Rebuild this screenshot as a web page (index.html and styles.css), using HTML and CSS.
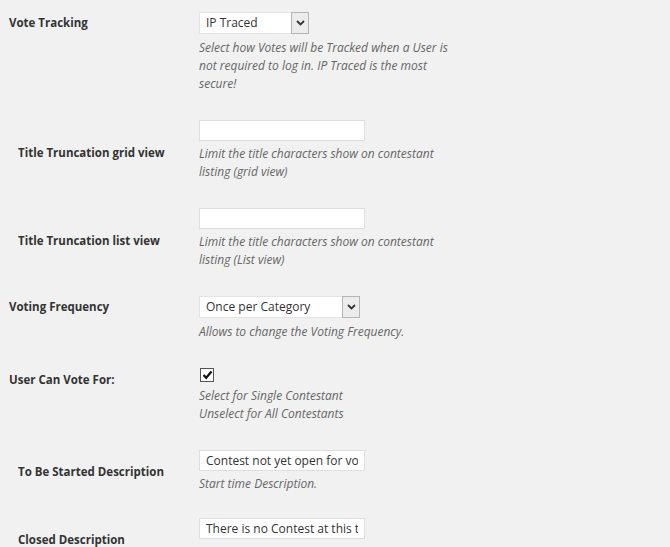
FILE: index.html
```html
<!DOCTYPE html>
<html>
<head>
	<title>Contest settings</title>
	<link rel="stylesheet" href="styles.css">
</head>
<body>
	<div class="settings">
		<div class="row top">
			<label class="label">Vote Tracking</label>
			<div class="field">
				<div class="select narrow">
					<span class="value">IP Traced</span>
					<span class="arrow"><svg width="9" height="6" viewBox="0 0 9 6"><path d="M1 1 L4.5 4.5 L8 1" fill="none" stroke="#333" stroke-width="1.8"/></svg></span>
				</div>
				<p class="desc select-desc">Select how Votes will be Tracked when a User is not required to log in. IP Traced is the most secure!</p>
			</div>
		</div>

		<div class="row sub">
			<label class="label">Title Truncation grid view</label>
			<div class="field">
				<input type="text" class="text" value="">
				<p class="desc">Limit the title characters show on contestant<br>listing (grid view)</p>
			</div>
		</div>

		<div class="row sub">
			<label class="label">Title Truncation list view</label>
			<div class="field">
				<input type="text" class="text" value="">
				<p class="desc">Limit the title characters show on contestant<br>listing (List view)</p>
			</div>
		</div>

		<div class="row top">
			<label class="label">Voting Frequency</label>
			<div class="field">
				<div class="select wide">
					<span class="value">Once per Category</span>
					<span class="arrow"><svg width="9" height="6" viewBox="0 0 9 6"><path d="M1 1 L4.5 4.5 L8 1" fill="none" stroke="#333" stroke-width="1.8"/></svg></span>
				</div>
				<p class="desc select-desc">Allows to change the Voting Frequency.</p>
			</div>
		</div>

		<div class="row top check-row">
			<label class="label">User Can Vote For:</label>
			<div class="field">
				<span class="checkbox"><svg width="11" height="10" viewBox="0 0 11 10"><path d="M1.5 5 L4.2 7.8 L9.5 1.5" fill="none" stroke="#111" stroke-width="2.2"/></svg></span>
				<p class="desc check-desc">Select for Single Contestant<br>Unselect for All Contestants</p>
			</div>
		</div>

		<div class="row sub short">
			<label class="label">To Be Started Description</label>
			<div class="field">
				<input type="text" class="text" value="Contest not yet open for voting">
				<p class="desc">Start time Description.</p>
			</div>
		</div>

		<div class="row sub top last">
			<label class="label">Closed Description</label>
			<div class="field">
				<input type="text" class="text" value="There is no Contest at this time">
			</div>
		</div>
	</div>
</body>
</html>
```

FILE: styles.css
```css
body{
	margin: 0;
	background-color: #f1f1f1;
	font-family: "Open Sans", "Liberation Sans", sans-serif;
	color: #333;
	overflow: hidden;
}
.settings{
	padding: 12px 0 0 9px;
}
.row{
	display: flex;
	align-items: center;
	margin-bottom: 27px;
}
.row.top{
	align-items: flex-start;
}
.row.short{
	margin-bottom: 25px;
}
.row.last{
	margin-bottom: 0;
}
.label{
	width: 190px;
	flex-shrink: 0;
	font-size: 11.5px;
	font-weight: bold;
	color: #333;
	line-height: 22px;
}
.row.sub .label{
	box-sizing: border-box;
	padding-left: 9px;
	padding-top: 4px;
}
.row.short .label{
	padding-top: 0;
}
.row.last .label{
	padding-top: 11px;
}
.check-row .label{
	padding-top: 1px;
}
.field{
	width: 258px;
}
.desc{
	margin: 4px 0 0 0;
	font-size: 12px;
	font-style: italic;
	color: #666;
	line-height: 18px;
}
.select-desc{
	margin-top: 5px;
}
.check-desc{
	margin-top: 5px;
}
.select{
	display: flex;
	height: 22px;
	box-sizing: border-box;
	background-color: #fff;
	border: 1px solid #e4e4e4;
}
.select.narrow{
	width: 110px;
}
.select.wide{
	width: 161px;
}
.select .value{
	flex: 1;
	padding-left: 6px;
	font-size: 12px;
	line-height: 20px;
	color: #333;
}
.select .arrow{
	width: 18px;
	margin: -1px -1px -1px 0;
	box-sizing: border-box;
	border: 1px solid #b4b4b4;
	background-color: #ececec;
	display: flex;
	align-items: center;
	justify-content: center;
}
.text{
	display: block;
	width: 166px;
	height: 21px;
	box-sizing: border-box;
	margin: 0;
	padding: 0 6px;
	border: 1px solid #dedede;
	background-color: #fff;
	font-family: "Open Sans", "Liberation Sans", sans-serif;
	font-size: 12px;
	color: #333;
	outline: none;
}
.checkbox{
	display: flex;
	align-items: center;
	justify-content: center;
	width: 14px;
	height: 14px;
	margin-left: 1px;
	box-sizing: border-box;
	border: 1px solid #555;
	background-color: #fff;
}
```
